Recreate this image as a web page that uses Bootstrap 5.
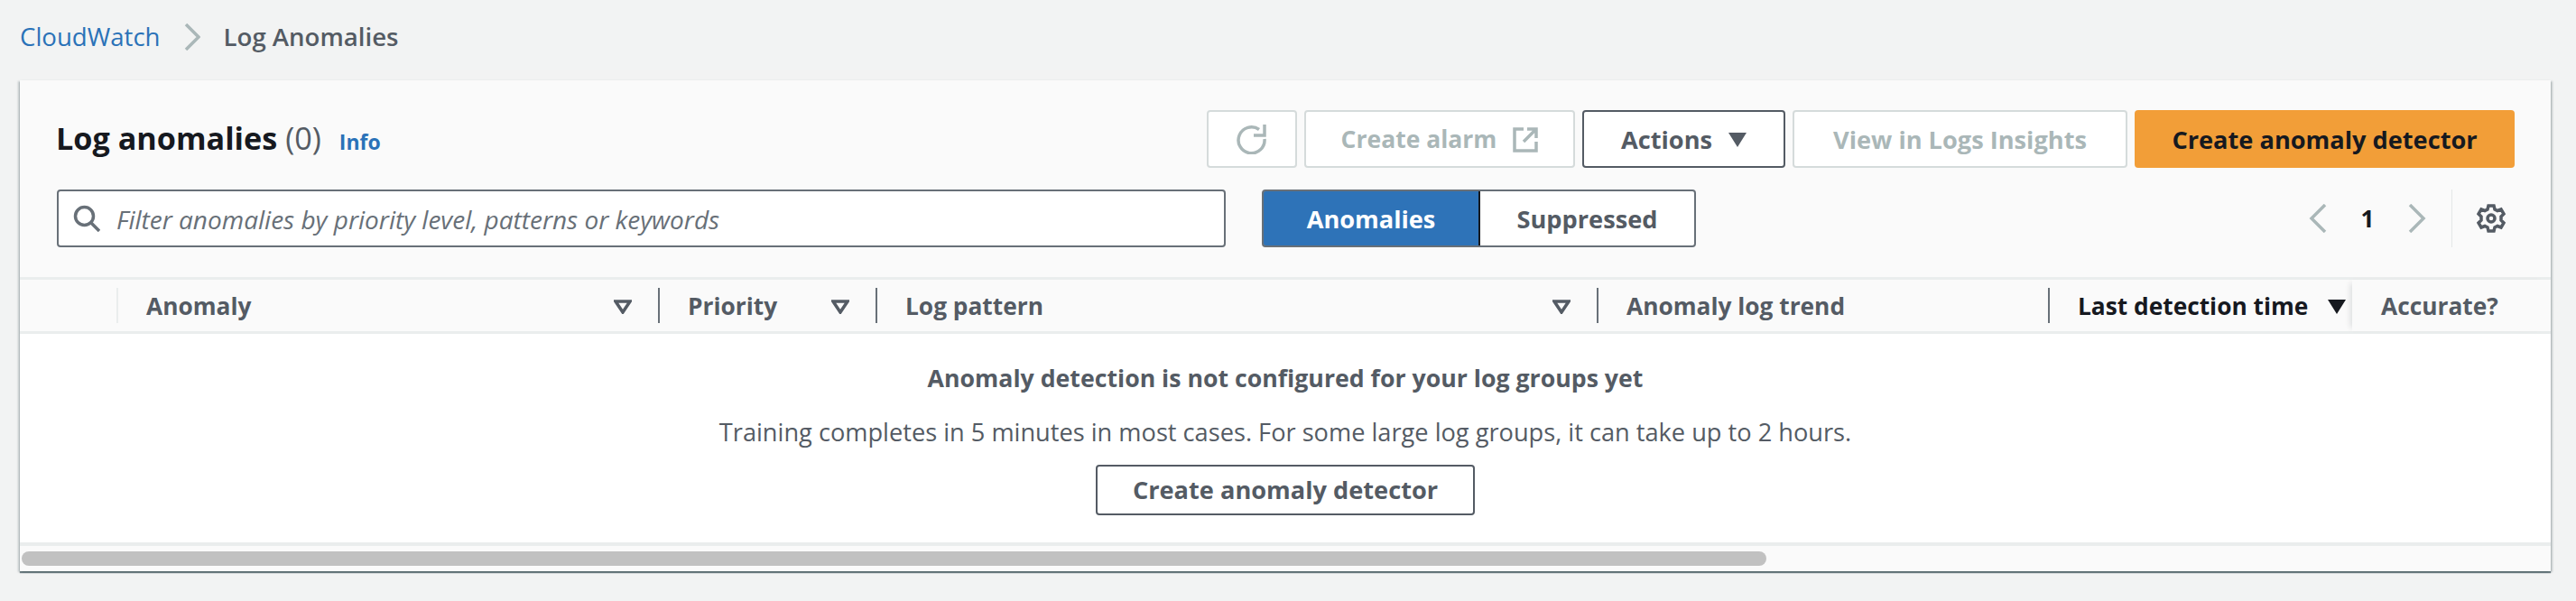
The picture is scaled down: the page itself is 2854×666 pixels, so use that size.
<!DOCTYPE html>
<html lang="en"><head><meta charset="utf-8"><title>Log Anomalies</title>
<link href="https://cdn.jsdelivr.net/npm/bootstrap@5.3.0/dist/css/bootstrap.min.css" rel="stylesheet">
<style>
html,body{height:100%}
body{background:#f2f3f3;font-family:"Open Sans","Noto Sans",sans-serif;font-size:26.3px;color:#16191f;overflow:hidden}
.crumbs{height:89px;padding:0 0 8px 22px;gap:26px;font-size:27.6px}
.crumbs a{color:#2a72b8;text-decoration:none}
.crumbs b{font-weight:600;color:#545b64}
.panel{margin:0 28px 0 22px;background:#fafafa;box-shadow:0 2px 1px rgba(0,28,36,.5),2px 1px 2px rgba(0,28,36,.2),-2px 1px 2px rgba(0,28,36,.2)}
.head{padding:33px 40px 33px 41px;height:218px}
.toprow{height:64px;margin-bottom:24px}
.ttl{font-size:34.2px;font-weight:700;line-height:64px;margin:0 0 0 -1px;padding-top:2px}
.ttl span{font-weight:400;color:#545b64}
.ttl a{font-size:23px;font-weight:700;color:#2a72b8;text-decoration:none;margin-left:20px}
.awsbtn{height:64px;border-radius:4px;border:2px solid #545b64;background:#fff;color:#545b64;font-weight:700;font-size:27.2px;padding:2px 0 0;gap:18px}
.awsbtn.off{border-color:#d5dbdb;color:#aab7b8}
.awsbtn.go{border:0;background:#f29e38;color:#16191f}
.w-refresh{width:100px;padding:0}.w-alarm{width:300px;font-size:26.500px}.w-act{width:225px}.w-view{width:371px}.w-new{width:421px}
.btnrow{gap:8px}
.search{width:1295px;height:64px;border:2px solid #687078;border-radius:4px;background:#fff;padding-left:16px;gap:18px}
.search span{font-style:italic;color:#687078;font-size:28px;padding-top:2px}
.seg{margin-left:40px;height:64px;width:481px;border:2px solid #687078;border-radius:4px;background:#fff;overflow:hidden;font-size:27.2px}
.seg div{display:flex;align-items:center;justify-content:center;font-weight:700;color:#545b64;padding-top:2px}
.seg .on{width:242px;margin:-2px 0 -2px -2px;background:#2e73b8;color:#fff;border:2px solid #16191f;border-radius:4px 0 0 4px}
.pager{height:64px;padding-right:10px}
.pager .num{font-weight:700;width:88px;text-align:center;padding-top:2px}
.pager .vline{width:1px;height:64px;background:#e4e7e7;margin:0 27px}
.thead{height:63px;border-top:3px solid #eaeded;border-bottom:3px solid #eaeded;font-weight:700;color:#545b64}
.th{position:relative;height:100%;display:flex;align-items:center;justify-content:space-between;padding:2px 29px 0 33px}
.th::before{content:"";position:absolute;left:0;top:9px;bottom:9px;width:2px;background:#687078}
.th.first::before{background:#eaeded}
.c0{width:107px;padding:0}.c0::before{display:none}
.c1{width:600px}.c2{width:241px}.c3{width:799px}.c4{width:500px}.c5{width:337px;color:#16191f;padding-right:7px}.c6{width:218px;padding-left:32px}
.c6::before{display:none}
.c6{background:#fafafa;box-shadow:-6px 0 6px -4px rgba(0,28,36,.12)}
.tbody{height:235px;background:#fff;border-bottom:4px solid #eaeded}
.tbody h5{font-size:26.700px;font-weight:700;color:#545b64;margin:0 0 24px;line-height:36px}
.tbody p{color:#545b64;margin:0 0 18px;line-height:36px;font-size:27.200px}
.tbody .awsbtn{height:56px;width:420px}
.foot{height:28px;padding:6px 0 6px 2px}
.thumb{width:1933px;height:16px;border-radius:8px;background:#c1c1c1}
</style></head>
<body>
<nav class="crumbs d-flex align-items-center">
<a href="#">CloudWatch</a>
<svg width="18" height="30" viewBox="0 0 18 30" fill="none" stroke="#aab7b8" stroke-width="3.500"><path d="M2 1l14 14L2 29"/></svg>
<b>Log Anomalies</b>
</nav>
<main class="panel">
<section class="head">
<div class="toprow d-flex justify-content-between align-items-center">
<h1 class="ttl">Log anomalies <span>(0)</span><a href="#">Info</a></h1>
<div class="d-flex btnrow">
<button class="awsbtn off w-refresh d-flex align-items-center justify-content-center" type="button"><svg width="34" height="34" viewBox="0 0 34 34" fill="none" stroke="#aab7b8" stroke-width="3.500"><path d="M25 6.500A14.500 14.500 0 1 0 31 17M31 1v12H19"/></svg></button>
<button class="awsbtn off w-alarm d-flex align-items-center justify-content-center" type="button">Create alarm<svg width="28" height="28" viewBox="0 0 28 28" fill="none" stroke="#aab7b8" stroke-width="3.500"><path d="M12 2H2v24h24V16M16 2h10v10M26 2L12 16"/></svg></button>
<button class="awsbtn w-act d-flex align-items-center justify-content-center" type="button">Actions<svg width="20" height="16" viewBox="0 0 20 16"><path d="M0 0h20L10 16z" fill="#545b64"/></svg></button>
<button class="awsbtn off w-view d-flex align-items-center justify-content-center" type="button">View in Logs Insights</button>
<button class="awsbtn go w-new d-flex align-items-center justify-content-center" type="button">Create anomaly detector</button>
</div></div>
<div class="d-flex align-items-center">
<div class="search d-flex align-items-center"><svg width="30" height="30" viewBox="0 0 30 30" fill="none" stroke="#687078" stroke-width="3.500"><circle cx="12.500" cy="12.500" r="10"/><path d="M20 20l9 9"/></svg><span>Filter anomalies by priority level, patterns or keywords</span></div>
<div class="seg d-flex"><div class="on">Anomalies</div><div class="flex-grow-1">Suppressed</div></div>
<div class="pager ms-auto d-flex align-items-center">
<svg width="22" height="32" viewBox="0 0 22 32" fill="none" stroke="#aab7b8" stroke-width="3.500"><path d="M19 1L4 16l15 15"/></svg>
<span class="num">1</span>
<svg width="22" height="32" viewBox="0 0 22 32" fill="none" stroke="#aab7b8" stroke-width="3.500"><path d="M3 1l15 15L3 31"/></svg>
<span class="vline"></span>
<svg width="32" height="32" viewBox="0 0 32 32" fill="none" stroke="#545b64" stroke-width="3.500"><circle cx="16" cy="16" r="4"/><path d="M13 2h6l1 4 3 1.500 4-1.500 3 5-3 3v4l3 3-3 5-4-1.500-3 1.500-1 4h-6l-1-4-3-1.500-4 1.500-3-5 3-3v-4l-3-3 3-5 4 1.500 3-1.500z"/></svg>
</div></div>
</section>
<div class="thead d-flex">
<div class="th c0"></div>
<div class="th first c1">Anomaly<svg width="20" height="16" viewBox="0 0 20 16" fill="none" stroke="#545b64" stroke-width="3.500"><path d="M2 2h16l-8 12z"/></svg></div>
<div class="th c2">Priority<svg width="20" height="16" viewBox="0 0 20 16" fill="none" stroke="#545b64" stroke-width="3.500"><path d="M2 2h16l-8 12z"/></svg></div>
<div class="th c3">Log pattern<svg width="20" height="16" viewBox="0 0 20 16" fill="none" stroke="#545b64" stroke-width="3.500"><path d="M2 2h16l-8 12z"/></svg></div>
<div class="th c4">Anomaly log trend</div>
<div class="th c5">Last detection time<svg width="20" height="16" viewBox="0 0 20 16"><path d="M0 0h20L10 16z" fill="#16191f"/></svg></div>
<div class="th c6">Accurate?</div>
</div>
<div class="tbody d-flex flex-column align-items-center justify-content-center">
<h5>Anomaly detection is not configured for your log groups yet</h5>
<p>Training completes in 5 minutes in most cases. For some large log groups, it can take up to 2 hours.</p>
<button class="awsbtn" type="button">Create anomaly detector</button>
</div>
<div class="foot"><div class="thumb"></div></div>
</main>
</body></html>
